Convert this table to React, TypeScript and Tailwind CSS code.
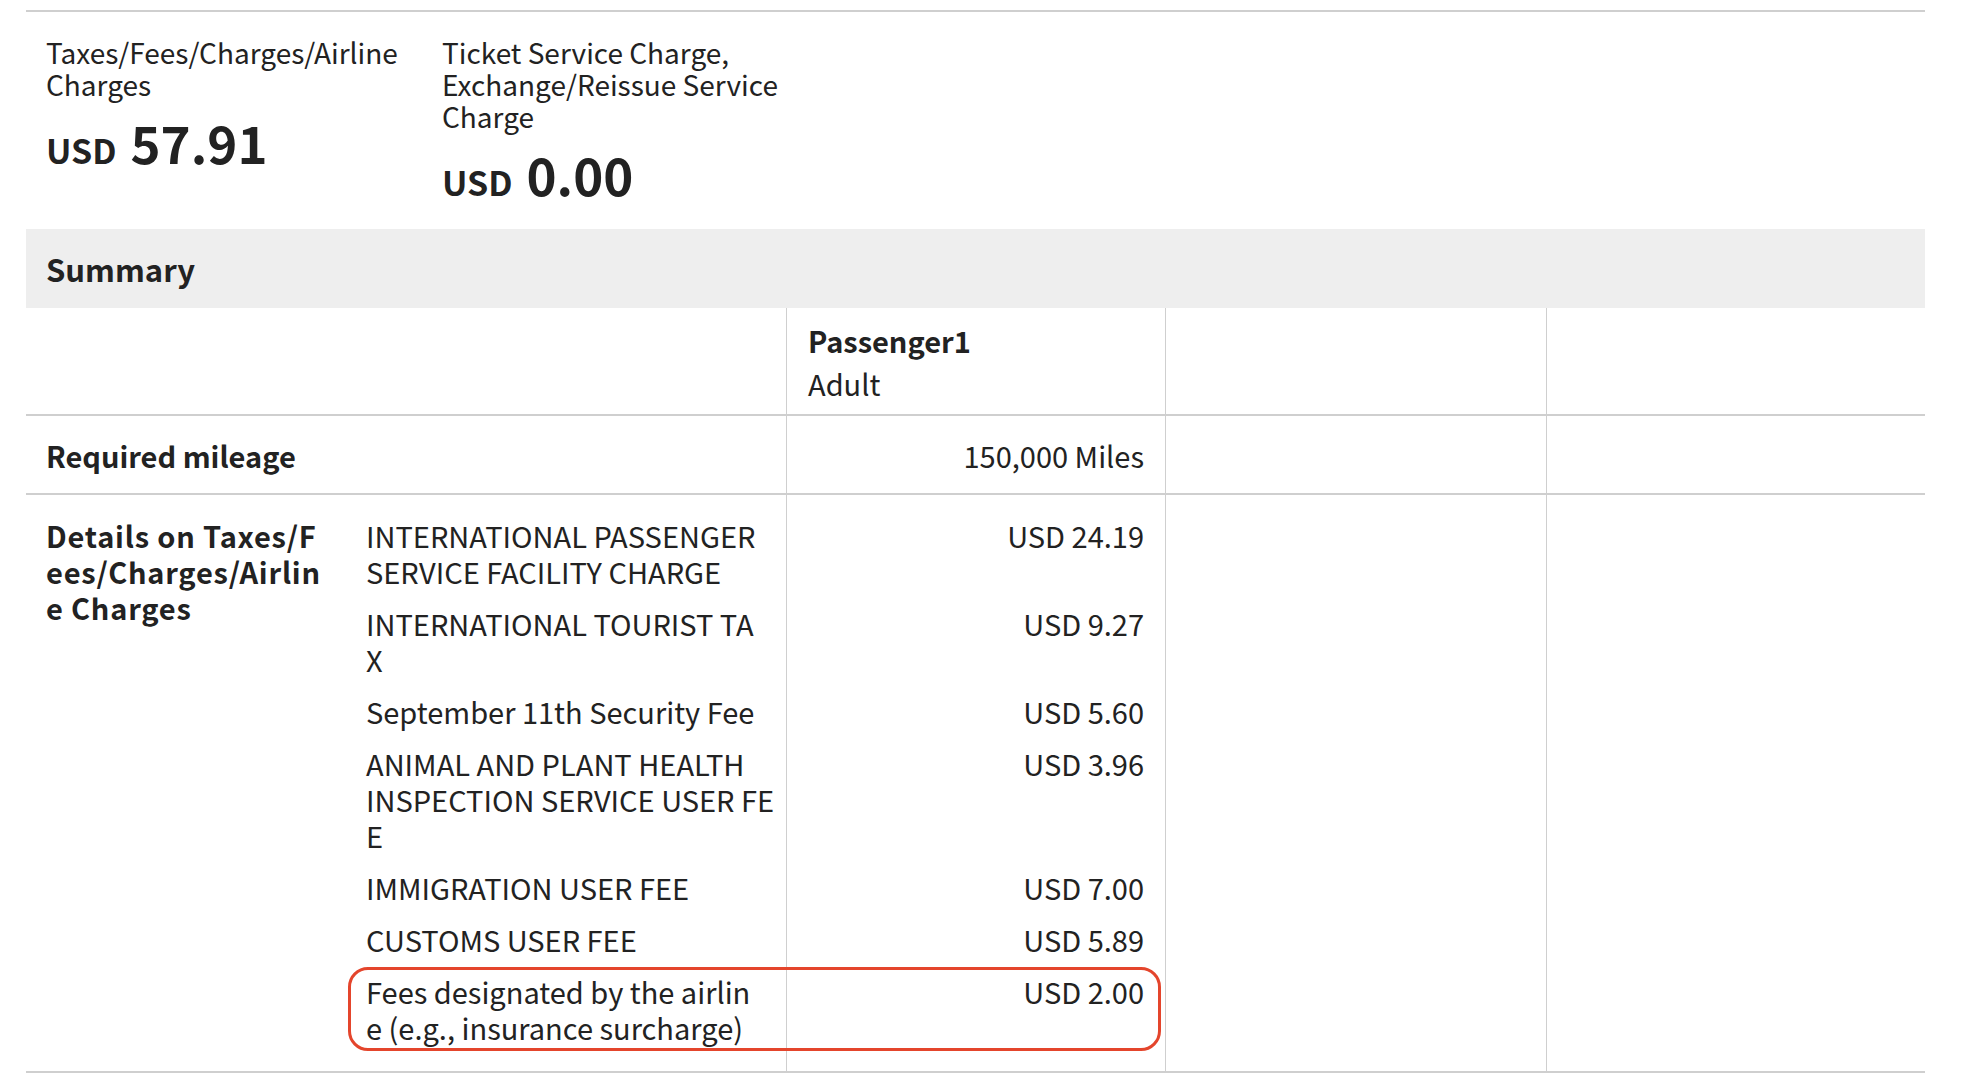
// names are split where the original page wraps them
const items = [
  { lines: ["INTERNATIONAL PASSENGER", "SERVICE FACILITY CHARGE"], amount: "USD 24.19" },
  { lines: ["INTERNATIONAL TOURIST TA", "X"], amount: "USD 9.27" },
  { lines: ["September 11th Security Fee"], amount: "USD 5.60" },
  { lines: ["ANIMAL AND PLANT HEALTH", "INSPECTION SERVICE USER FE", "E"], amount: "USD 3.96" },
  { lines: ["IMMIGRATION USER FEE"], amount: "USD 7.00" },
  { lines: ["CUSTOMS USER FEE"], amount: "USD 5.89" },
  { lines: ["Fees designated by the airlin", "e (e.g., insurance surcharge)"], amount: "USD 2.00", highlight: true },
];

function Amount({ value }: { value: string }) {
  return (
    <p className="mt-[14px] flex items-baseline gap-[14px] font-bold">
      <span className="text-[34px] leading-[40px]">USD</span>
      <span className="text-[51px] leading-[56px]">{value}</span>
    </p>
  );
}

export default function App() {
  return (
    <div className="min-h-screen bg-white pt-[10px] text-[#222] [font-family:'Noto_Sans_CJK_JP','Noto_Sans',sans-serif]">
      <div className="ml-[26px] mr-[39px]">
        <div className="flex border-t-2 border-[#cfcfcf] px-[20px] pt-[24px] pb-[27px] text-[28px] leading-[32px]">
          <div className="w-[396px] pr-[20px]">
            <p>Taxes/Fees/Charges/Airline Charges</p>
            <Amount value="57.91" />
          </div>
          <div className="w-[396px] pr-[20px]">
            <p>Ticket Service Charge, Exchange/Reissue Service Charge</p>
            <Amount value="0.00" />
          </div>
        </div>

        <div className="bg-[#eeeeee] px-[20px] py-[21px] text-[31px] font-bold leading-[37px]">
          Summary
        </div>

        <div className="grid grid-cols-[761px_379px_381px_1fr] border-b-2 border-[#cfcfcf] text-[29px] leading-[40px]">
          <div className="border-r border-[#cfcfcf]" />
          <div className="border-r border-[#cfcfcf] px-[21px] pt-[12px] pb-[11px]">
            <p className="font-bold">Passenger1</p>
            <p className="mt-[3px]">Adult</p>
          </div>
          <div className="border-r border-[#cfcfcf]" />
          <div />
        </div>

        <div className="grid grid-cols-[761px_379px_381px_1fr] border-b-2 border-[#cfcfcf] text-[29px] leading-[36px]">
          <div className="border-r border-[#cfcfcf] px-[20px] pt-[21px] pb-[20px] font-bold">
            Required mileage
          </div>
          <div className="border-r border-[#cfcfcf] px-[21px] pt-[21px] pb-[20px] text-right">
            150,000 Miles
          </div>
          <div className="border-r border-[#cfcfcf]" />
          <div />
        </div>

        <div className="grid grid-cols-[340px_421px_379px_381px_1fr] border-b-2 border-[#cfcfcf] text-[29px] leading-[36px]">
          <div
            className="whitespace-nowrap pl-[20px] pt-[22px] font-bold tracking-[0.8px]"
            style={{ gridRow: `1 / span ${items.length}` }}
          >
            <p>Details on Taxes/F</p>
            <p>ees/Charges/Airlin</p>
            <p>e Charges</p>
          </div>
          {items.map((item, i) => {
            const pad =
              (i === 0 ? "pt-[22px] " : "") +
              (i === items.length - 1 ? "pb-[26px]" : "pb-[16px]");
            return (
              <div key={item.amount} className="contents">
                <div
                  className={`relative whitespace-nowrap border-r border-[#cfcfcf] pr-[21px] ${pad}`}
                  style={{ gridColumn: 2, gridRow: i + 1 }}
                >
                  {item.lines.map((line) => (
                    <p key={line}>{line}</p>
                  ))}
                  {item.highlight && (
                    <div className="pointer-events-none absolute -left-[18px] -top-[6px] h-[84px] w-[813px] rounded-[20px] border-[3px] border-[#e4452c]" />
                  )}
                </div>
                <div
                  className={`border-r border-[#cfcfcf] pr-[21px] text-right ${pad}`}
                  style={{ gridColumn: 3, gridRow: i + 1 }}
                >
                  {item.amount}
                </div>
              </div>
            );
          })}
          <div
            className="border-r border-[#cfcfcf]"
            style={{ gridColumn: 4, gridRow: `1 / span ${items.length}` }}
          />
          <div style={{ gridColumn: 5, gridRow: `1 / span ${items.length}` }} />
        </div>
      </div>
    </div>
  );
}
